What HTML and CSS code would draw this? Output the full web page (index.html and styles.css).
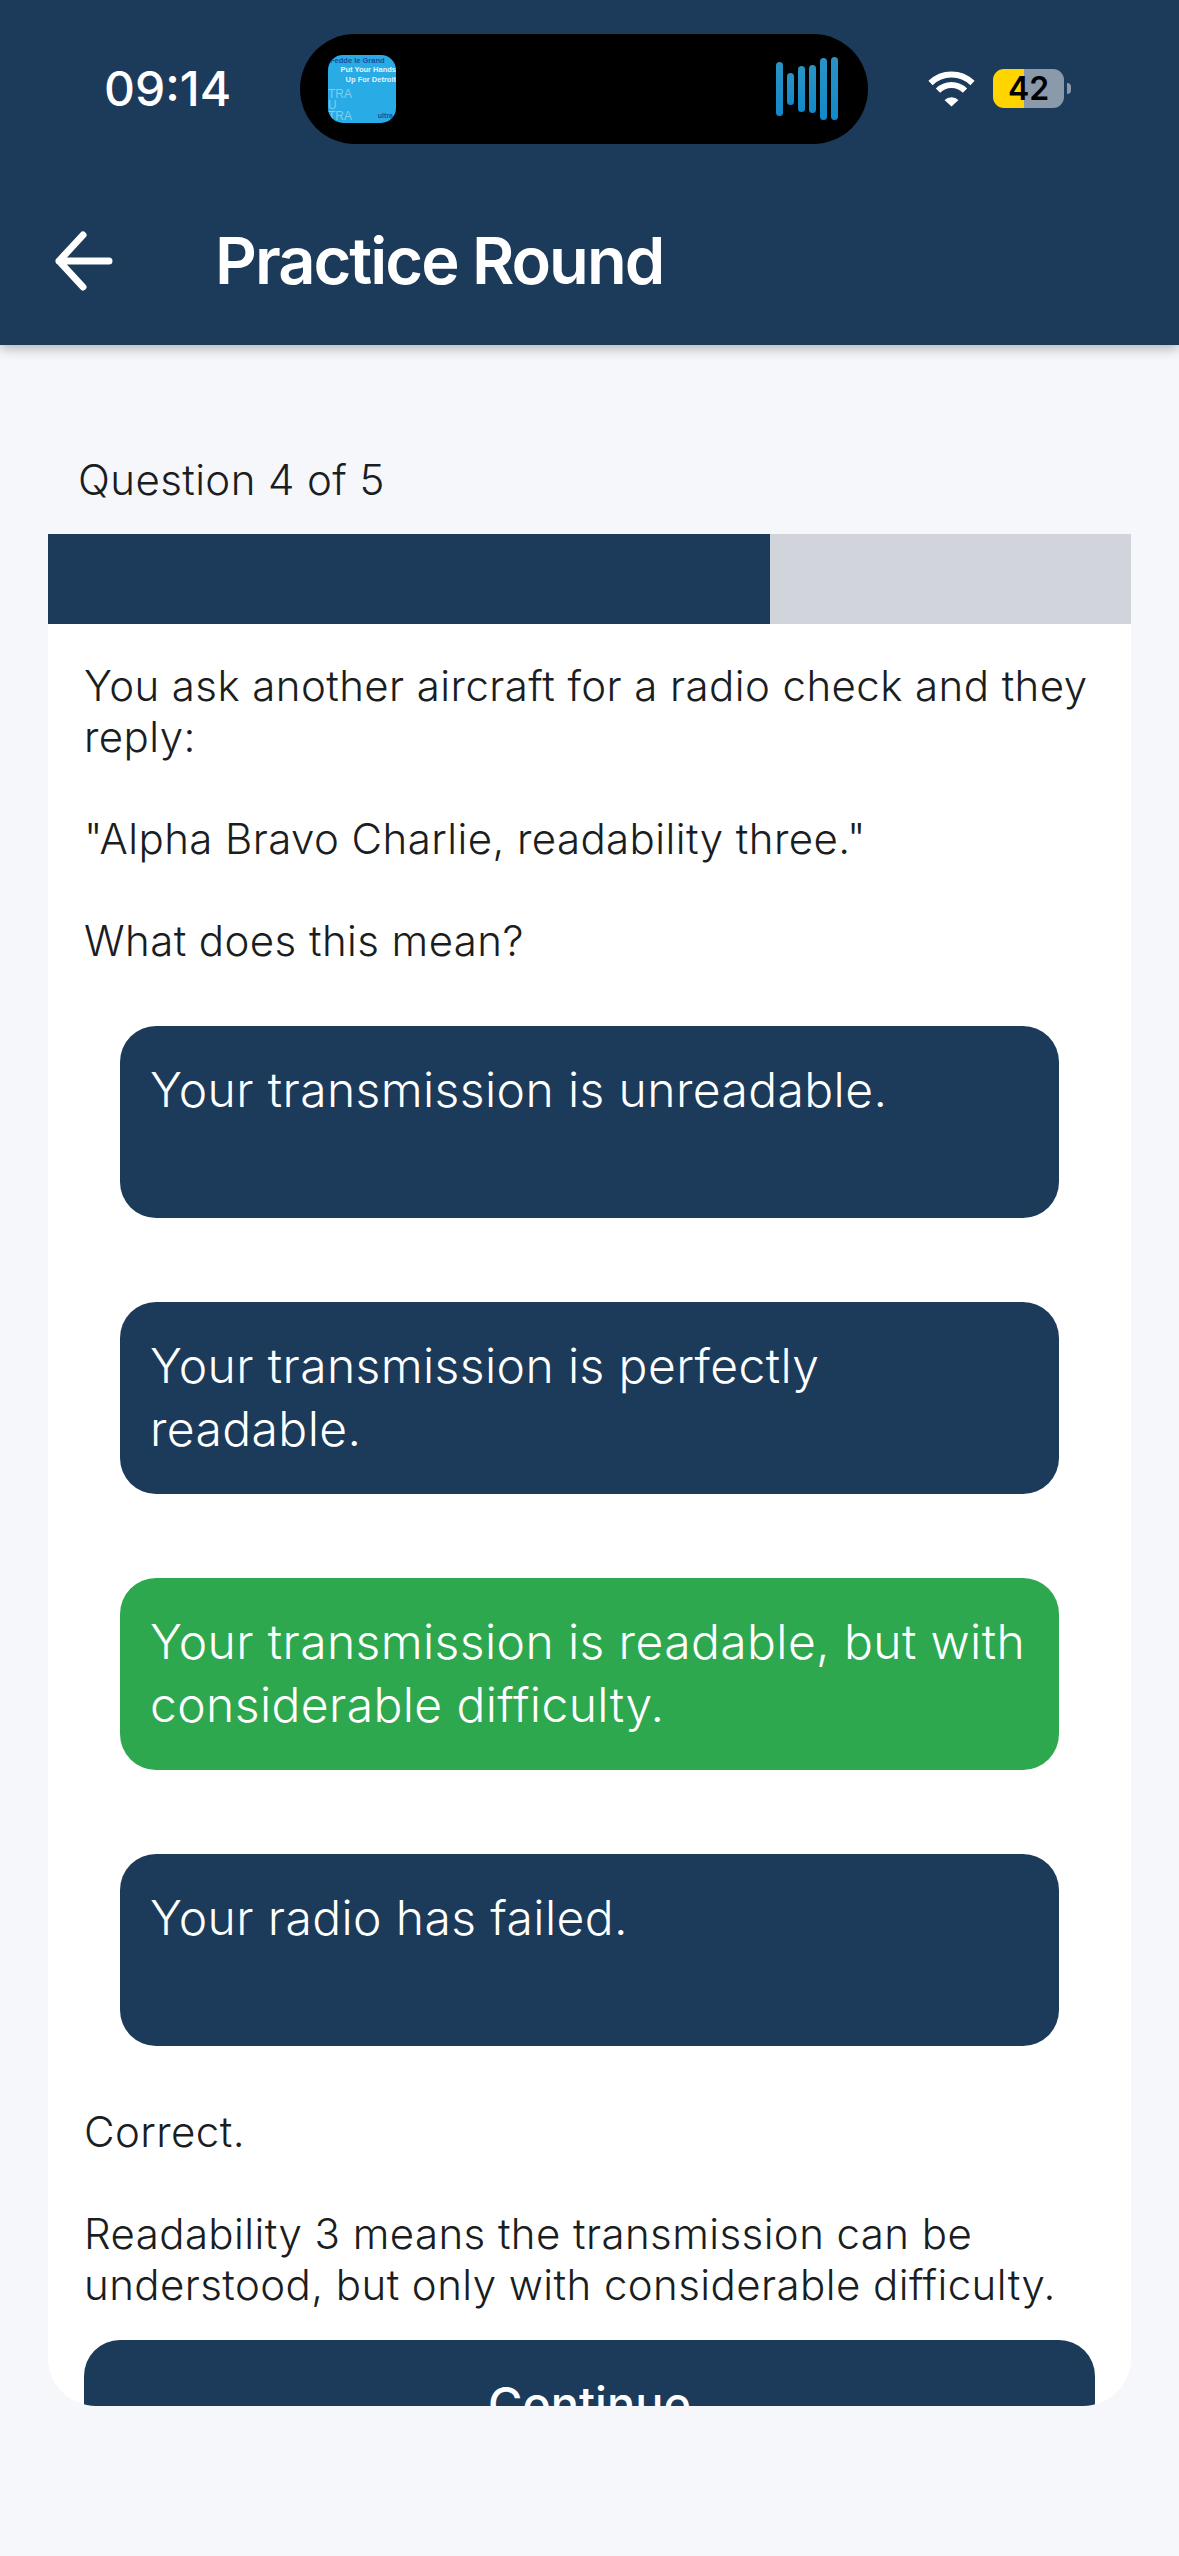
FILE: index.html
```html
<!DOCTYPE html>
<html>
<head>
  <title>Practice Round</title>
  <meta charset="UTF-8">
  <link rel="stylesheet" href="styles.css">
</head>
<body>
  <div class="header">
    <div class="status-bar">
      <span class="clock">09:14</span>
      <div class="island">
        <div class="album">
          <span class="album-artist">Fedde le Grand</span>
          <span class="album-title">Put Your Hands</span>
          <span class="album-title">Up For Detroit</span>
          <span class="album-label">TRA<br>U<br>TRA</span>
          <span class="album-logo">ultra</span>
        </div>
        <svg class="eq" width="63" height="63" viewBox="0 0 63 63">
          <defs>
            <linearGradient id="eqFill" x1="0" y1="0" x2="0" y2="1">
              <stop offset="0" stop-color="#2a93c4"/>
              <stop offset="1" stop-color="#1189c9"/>
            </linearGradient>
          </defs>
          <rect x="0" y="5" width="7" height="54" rx="3.5" fill="url(#eqFill)"/>
          <rect x="11" y="16" width="7" height="32" rx="3.5" fill="url(#eqFill)"/>
          <rect x="22" y="9" width="7" height="46" rx="3.5" fill="url(#eqFill)"/>
          <rect x="33" y="8" width="7" height="48" rx="3.5" fill="url(#eqFill)"/>
          <rect x="44" y="1" width="7" height="62" rx="3.5" fill="url(#eqFill)"/>
          <rect x="55" y="0" width="7" height="63" rx="3.5" fill="url(#eqFill)"/>
        </svg>
      </div>
      <svg class="wifi" width="47" height="36" viewBox="0 0 47 36">
        <path d="M2.5 12 A30 30 0 0 1 44.5 12" />
        <path d="M10 19.6 A19 19 0 0 1 37 19.6" />
        <path class="wifi-dot" d="M16.5 29 A10 10 0 0 1 30.5 29 L23.5 35.5 Z" />
      </svg>
      <div class="battery">
        <div class="battery-body">
          <span class="battery-level">42</span>
        </div>
        <div class="battery-cap"></div>
      </div>
    </div>
    <div class="app-bar">
      <svg class="back" width="60" height="64" viewBox="0 0 60 64">
        <path d="M6 32 H56 M30 6 L6 32 L30 58" />
      </svg>
      <h1>Practice Round</h1>
    </div>
  </div>

  <div class="content">
    <div class="question-count">Question 4 of 5</div>
    <div class="card">
      <div class="progress"><div class="progress-fill" style="width: 66.67%"></div></div>
      <div class="card-body">
        <p class="prompt">You ask another aircraft for a radio check and they reply:

"Alpha Bravo Charlie, readability three."

What does this mean?</p>
        <div class="options">
          <button class="option">Your transmission is unreadable.</button>
          <button class="option">Your transmission is perfectly readable.</button>
          <button class="option correct">Your transmission is readable, but with considerable difficulty.</button>
          <button class="option">Your radio has failed.</button>
        </div>
        <p class="feedback">Correct.

Readability 3 means the transmission can be understood, but only with considerable difficulty.</p>
        <button class="continue-btn">Continue</button>
      </div>
    </div>
  </div>
</body>
</html>
```

FILE: styles.css
```css
:root {
  --navy: #1c3a59;
  --page-bg: #f6f7fb;
  --text-color: #1a1d21;
  --green: #2ea84f;
  --battery-grey: #8a9aab;
}

* {
  box-sizing: border-box;
  margin: 0;
  padding: 0;
}

body {
  width: 1179px;
  height: 2556px;
  overflow: hidden;
  background-color: var(--page-bg);
  color: var(--text-color);
  font-family: Inter, 'Noto Sans', sans-serif;
  font-weight: 350;
}

.header {
  height: 345px;
  background-color: var(--navy);
  box-shadow: 0 3px 12px rgba(0,0,0,0.3);
  color: white;
}

.status-bar {
  display: flex;
  align-items: center;
  height: 177px;
  padding-left: 104px;
}

.clock {
  width: 125px;
  font-size: 48px;
  font-weight: 500;
  line-height: 1;
}

.island {
  display: flex;
  justify-content: space-between;
  align-items: center;
  width: 568px;
  height: 110px;
  margin-left: 71px;
  padding: 0 29px 0 28px;
  border-radius: 55px;
  background-color: #000;
}

.album {
  display: flex;
  flex-direction: column;
  align-items: flex-end;
  position: relative;
  overflow: hidden;
  width: 68px;
  height: 68px;
  padding-top: 1px;
  border-radius: 15px;
  background-color: #29abe6;
  color: #e3f3fb;
  font-family: 'Liberation Sans', sans-serif;
  font-size: 7.5px;
  font-weight: 700;
  line-height: 9.5px;
  white-space: nowrap;
}

.album-artist {
  align-self: flex-start;
  margin-left: 2px;
  color: #1a4fa0;
}

.album-label {
  position: absolute;
  left: 0;
  bottom: 1px;
  color: #7fcdf0;
  font-size: 12px;
  font-weight: 400;
  line-height: 11px;
}

.album-logo {
  position: absolute;
  right: 3px;
  bottom: 4px;
  color: #1a4fa0;
  font-size: 7px;
  line-height: 7px;
}

.wifi {
  margin-left: 60px;
  fill: none;
  stroke: white;
  stroke-width: 6;
}

.wifi-dot {
  fill: white;
  stroke: none;
}

.battery {
  display: flex;
  align-items: center;
  margin-left: 18px;
}

.battery-body {
  width: 71px;
  height: 39px;
  border-radius: 11px;
  background: linear-gradient(to right, #ffd500 43.7%, var(--battery-grey) 43.7%);
  color: #000;
  font-size: 32px;
  font-weight: 600;
  line-height: 39px;
  text-align: center;
}

.battery-cap {
  width: 4px;
  height: 11px;
  margin-left: 3px;
  border-radius: 0 5px 5px 0;
  background-color: var(--battery-grey);
}

.app-bar {
  display: flex;
  align-items: center;
  height: 168px;
  padding-left: 53px;
}

.back {
  fill: none;
  stroke: white;
  stroke-width: 7;
  stroke-linecap: round;
  stroke-linejoin: round;
}

h1 {
  margin-left: 102px;
  padding-bottom: 2px;
  font-size: 65px;
  font-weight: 600;
  letter-spacing: -2px;
}

.content {
  padding: 109px 48px 0;
}

.question-count {
  padding-left: 30px;
  font-size: 42px;
  line-height: 51px;
  letter-spacing: 0.4px;
  margin-bottom: 29px;
}

.card {
  height: 1872px;
  overflow: hidden;
  border-radius: 0 0 48px 48px;
  background-color: white;
}

.progress {
  height: 90px;
  background-color: #d1d5db;
}

.progress-fill {
  height: 100%;
  background-color: var(--navy);
}

.card-body {
  padding: 36px 36px 0;
}

.prompt, .feedback {
  font-size: 42px;
  line-height: 51px;
  letter-spacing: 0.42px;
  white-space: pre-line;
}

.options {
  display: flex;
  flex-direction: column;
  gap: 84px;
  margin: 60px 0;
  padding: 0 36px;
}

.option {
  display: flex;
  align-items: flex-start;
  width: 100%;
  height: 192px;
  padding: 32px 30px 0;
  border: none;
  border-radius: 36px;
  background-color: var(--navy);
  color: white;
  font-family: inherit;
  font-size: 48px;
  font-weight: 350;
  line-height: 63px;
  letter-spacing: 0.4px;
  text-align: left;
}

.option.correct {
  background-color: var(--green);
}

.continue-btn {
  display: block;
  width: 100%;
  height: 126px;
  margin-top: 30px;
  border: none;
  border-radius: 36px;
  background-color: var(--navy);
  color: white;
  font-family: inherit;
  font-size: 47px;
  font-weight: 500;
}
```
